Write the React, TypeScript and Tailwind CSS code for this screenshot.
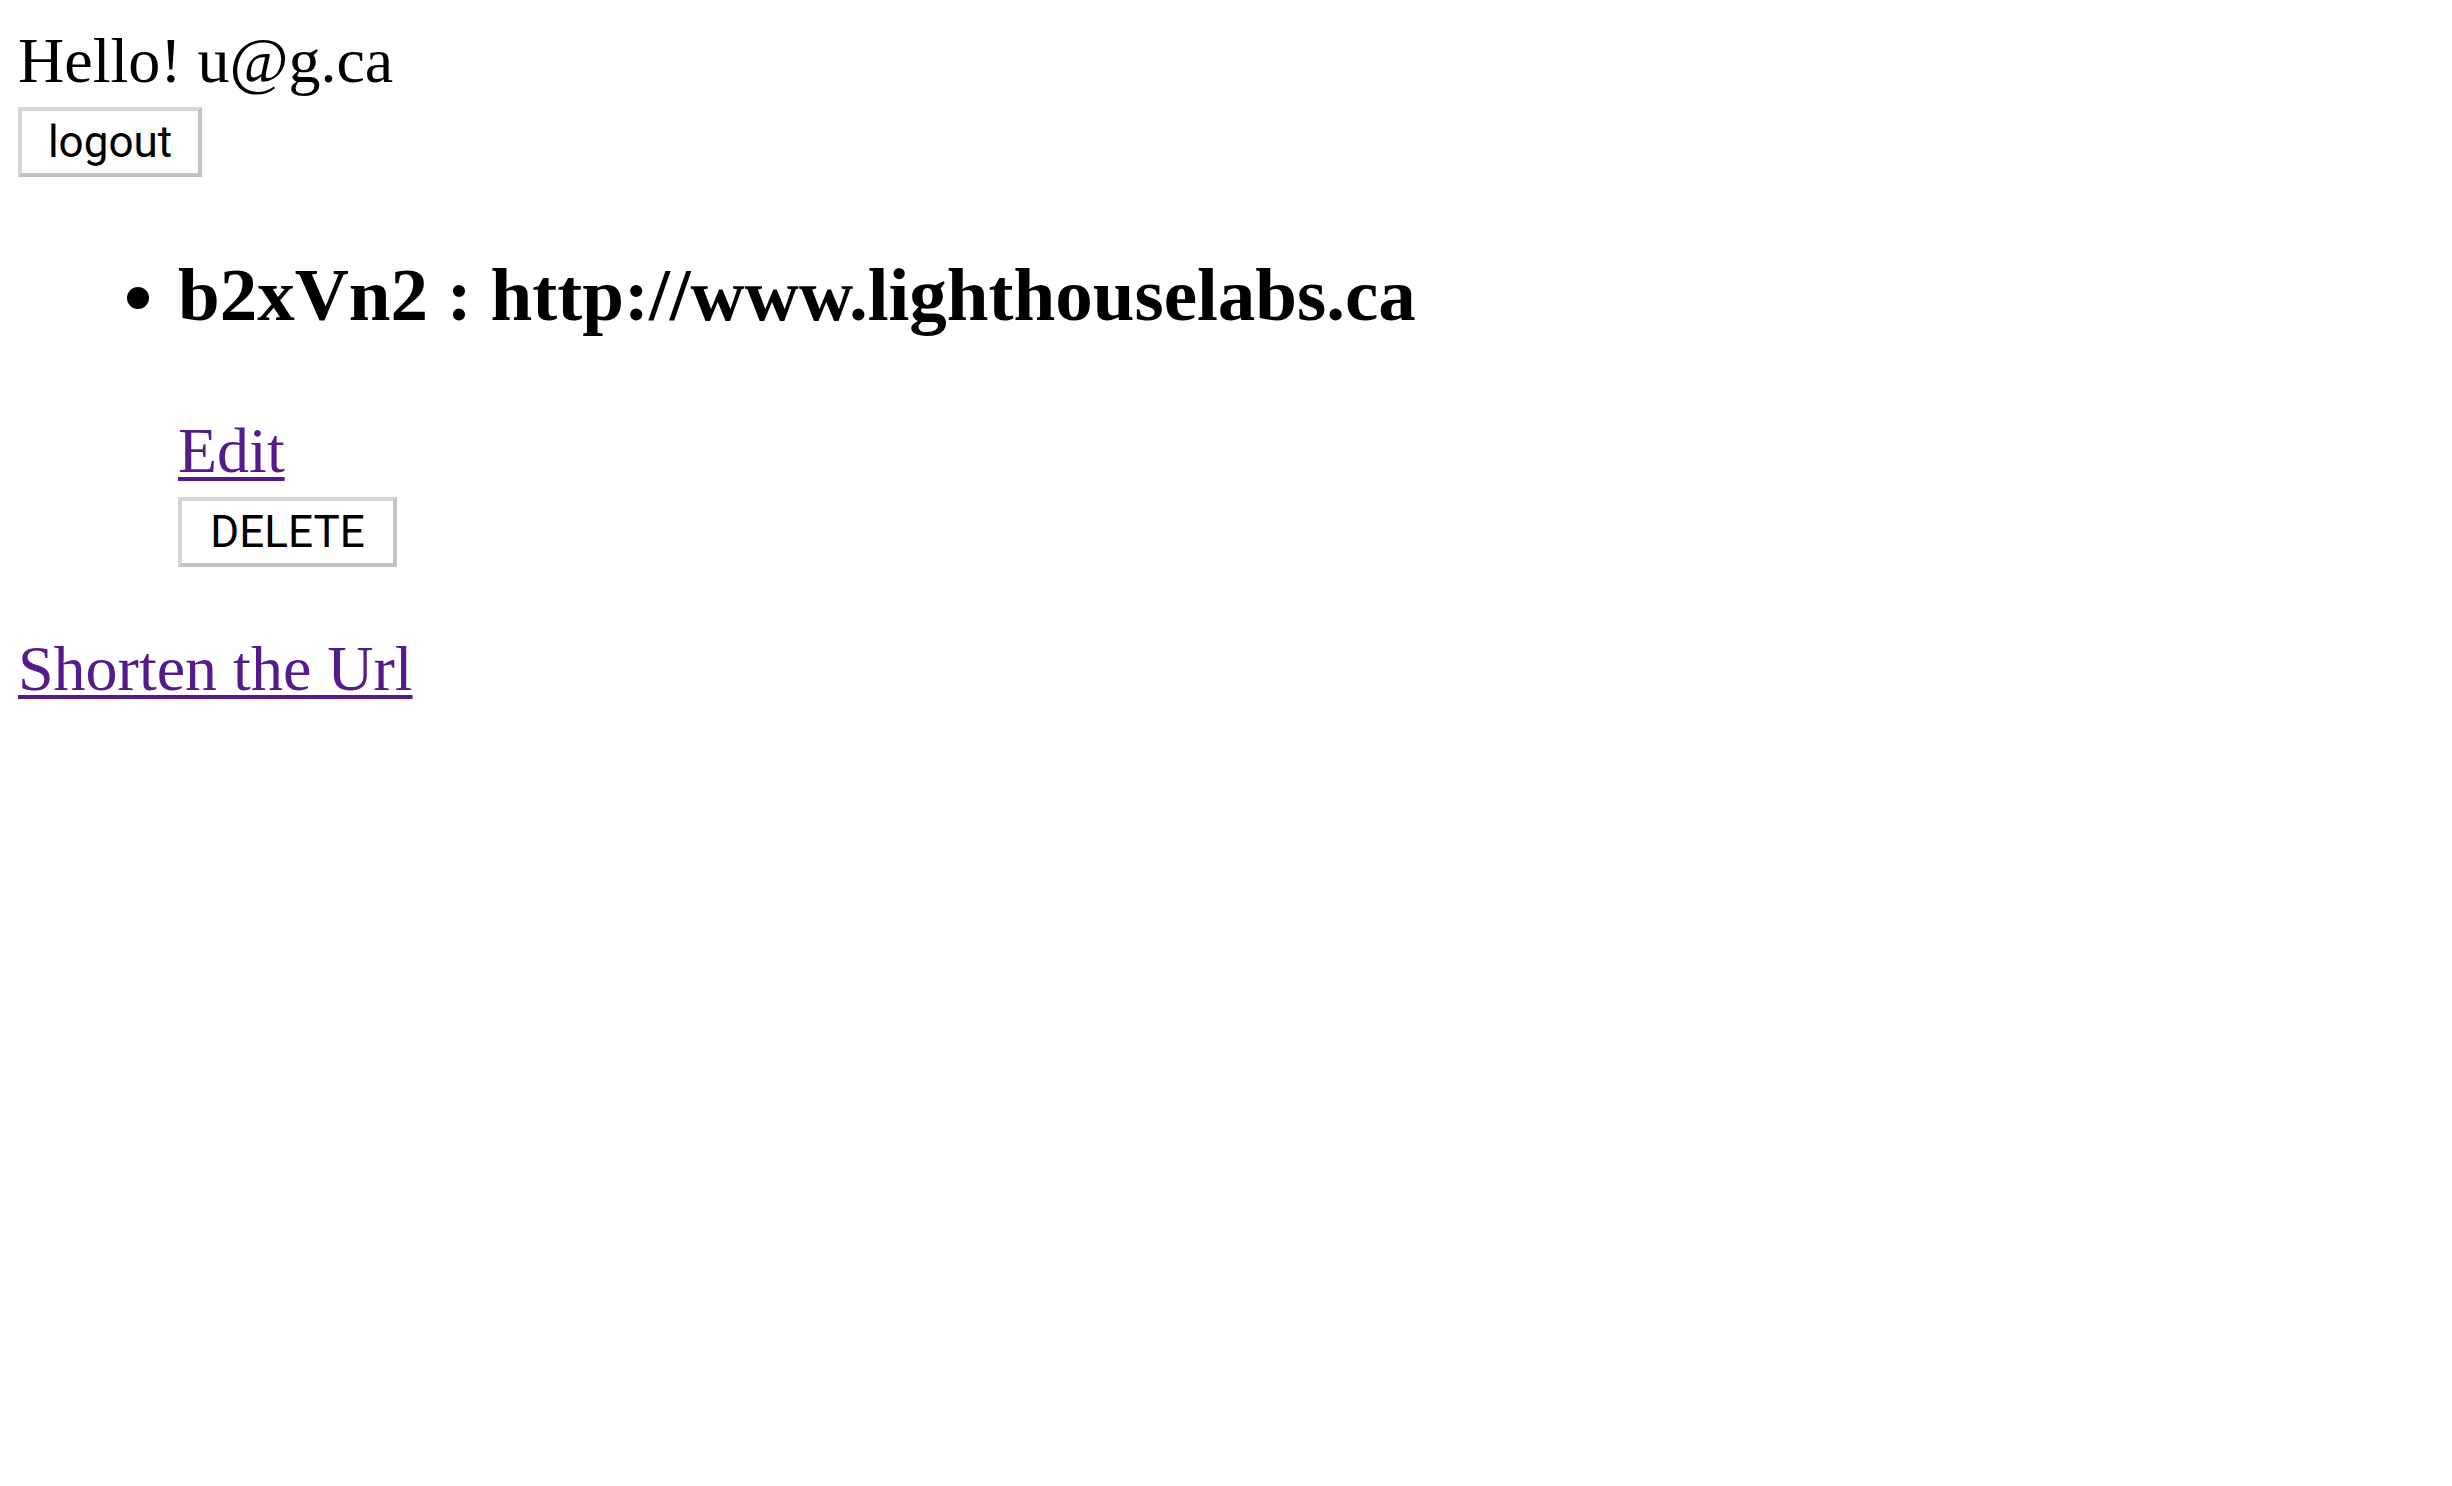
export default function App() {
  const serif = "font-['Liberation_Serif','Times_New_Roman',serif]";
  const btn =
    "flex h-[70px] items-center justify-center border-4 border-[#d6d6d6] border-r-[#c2c2c2] border-b-[#c2c2c2] bg-white font-['Roboto','Liberation_Sans',sans-serif] text-[44px] font-normal text-black";

  return (
    <div className={`min-h-screen w-full bg-white pt-[25px] pl-[18px] text-black ${serif}`}>
      {/* Greeting */}
      <div className="h-[71px] text-[64px] leading-[71px]">Hello! u@g.ca</div>
      <button type="button" className={`${btn} mt-[11px] w-[184px]`}>
        logout
      </button>

      {/* URL list */}
      <ul className="mt-[76px] list-disc pl-[160px]">
        <li className="text-[75px] leading-[83px]">
          <h3 className="h-[83px] text-[75px] font-bold leading-[83px]">
            b2xVn2 : http://www.lighthouselabs.ca
          </h3>
          <a
            href="#"
            className="mt-[79px] block h-[71px] w-fit text-[64px] leading-[71px] text-[#551a8b] underline decoration-[4px] underline-offset-[5px]"
          >
            Edit
          </a>
          <button type="button" className={`${btn} mt-[11px] w-[219px]`}>
            DELETE
          </button>
        </li>
      </ul>

      <a
        href="#"
        className="mt-[66px] block h-[71px] w-fit text-[64px] leading-[71px] text-[#551a8b] underline decoration-[4px] underline-offset-[5px]"
      >
        Shorten the Url
      </a>
    </div>
  );
}
